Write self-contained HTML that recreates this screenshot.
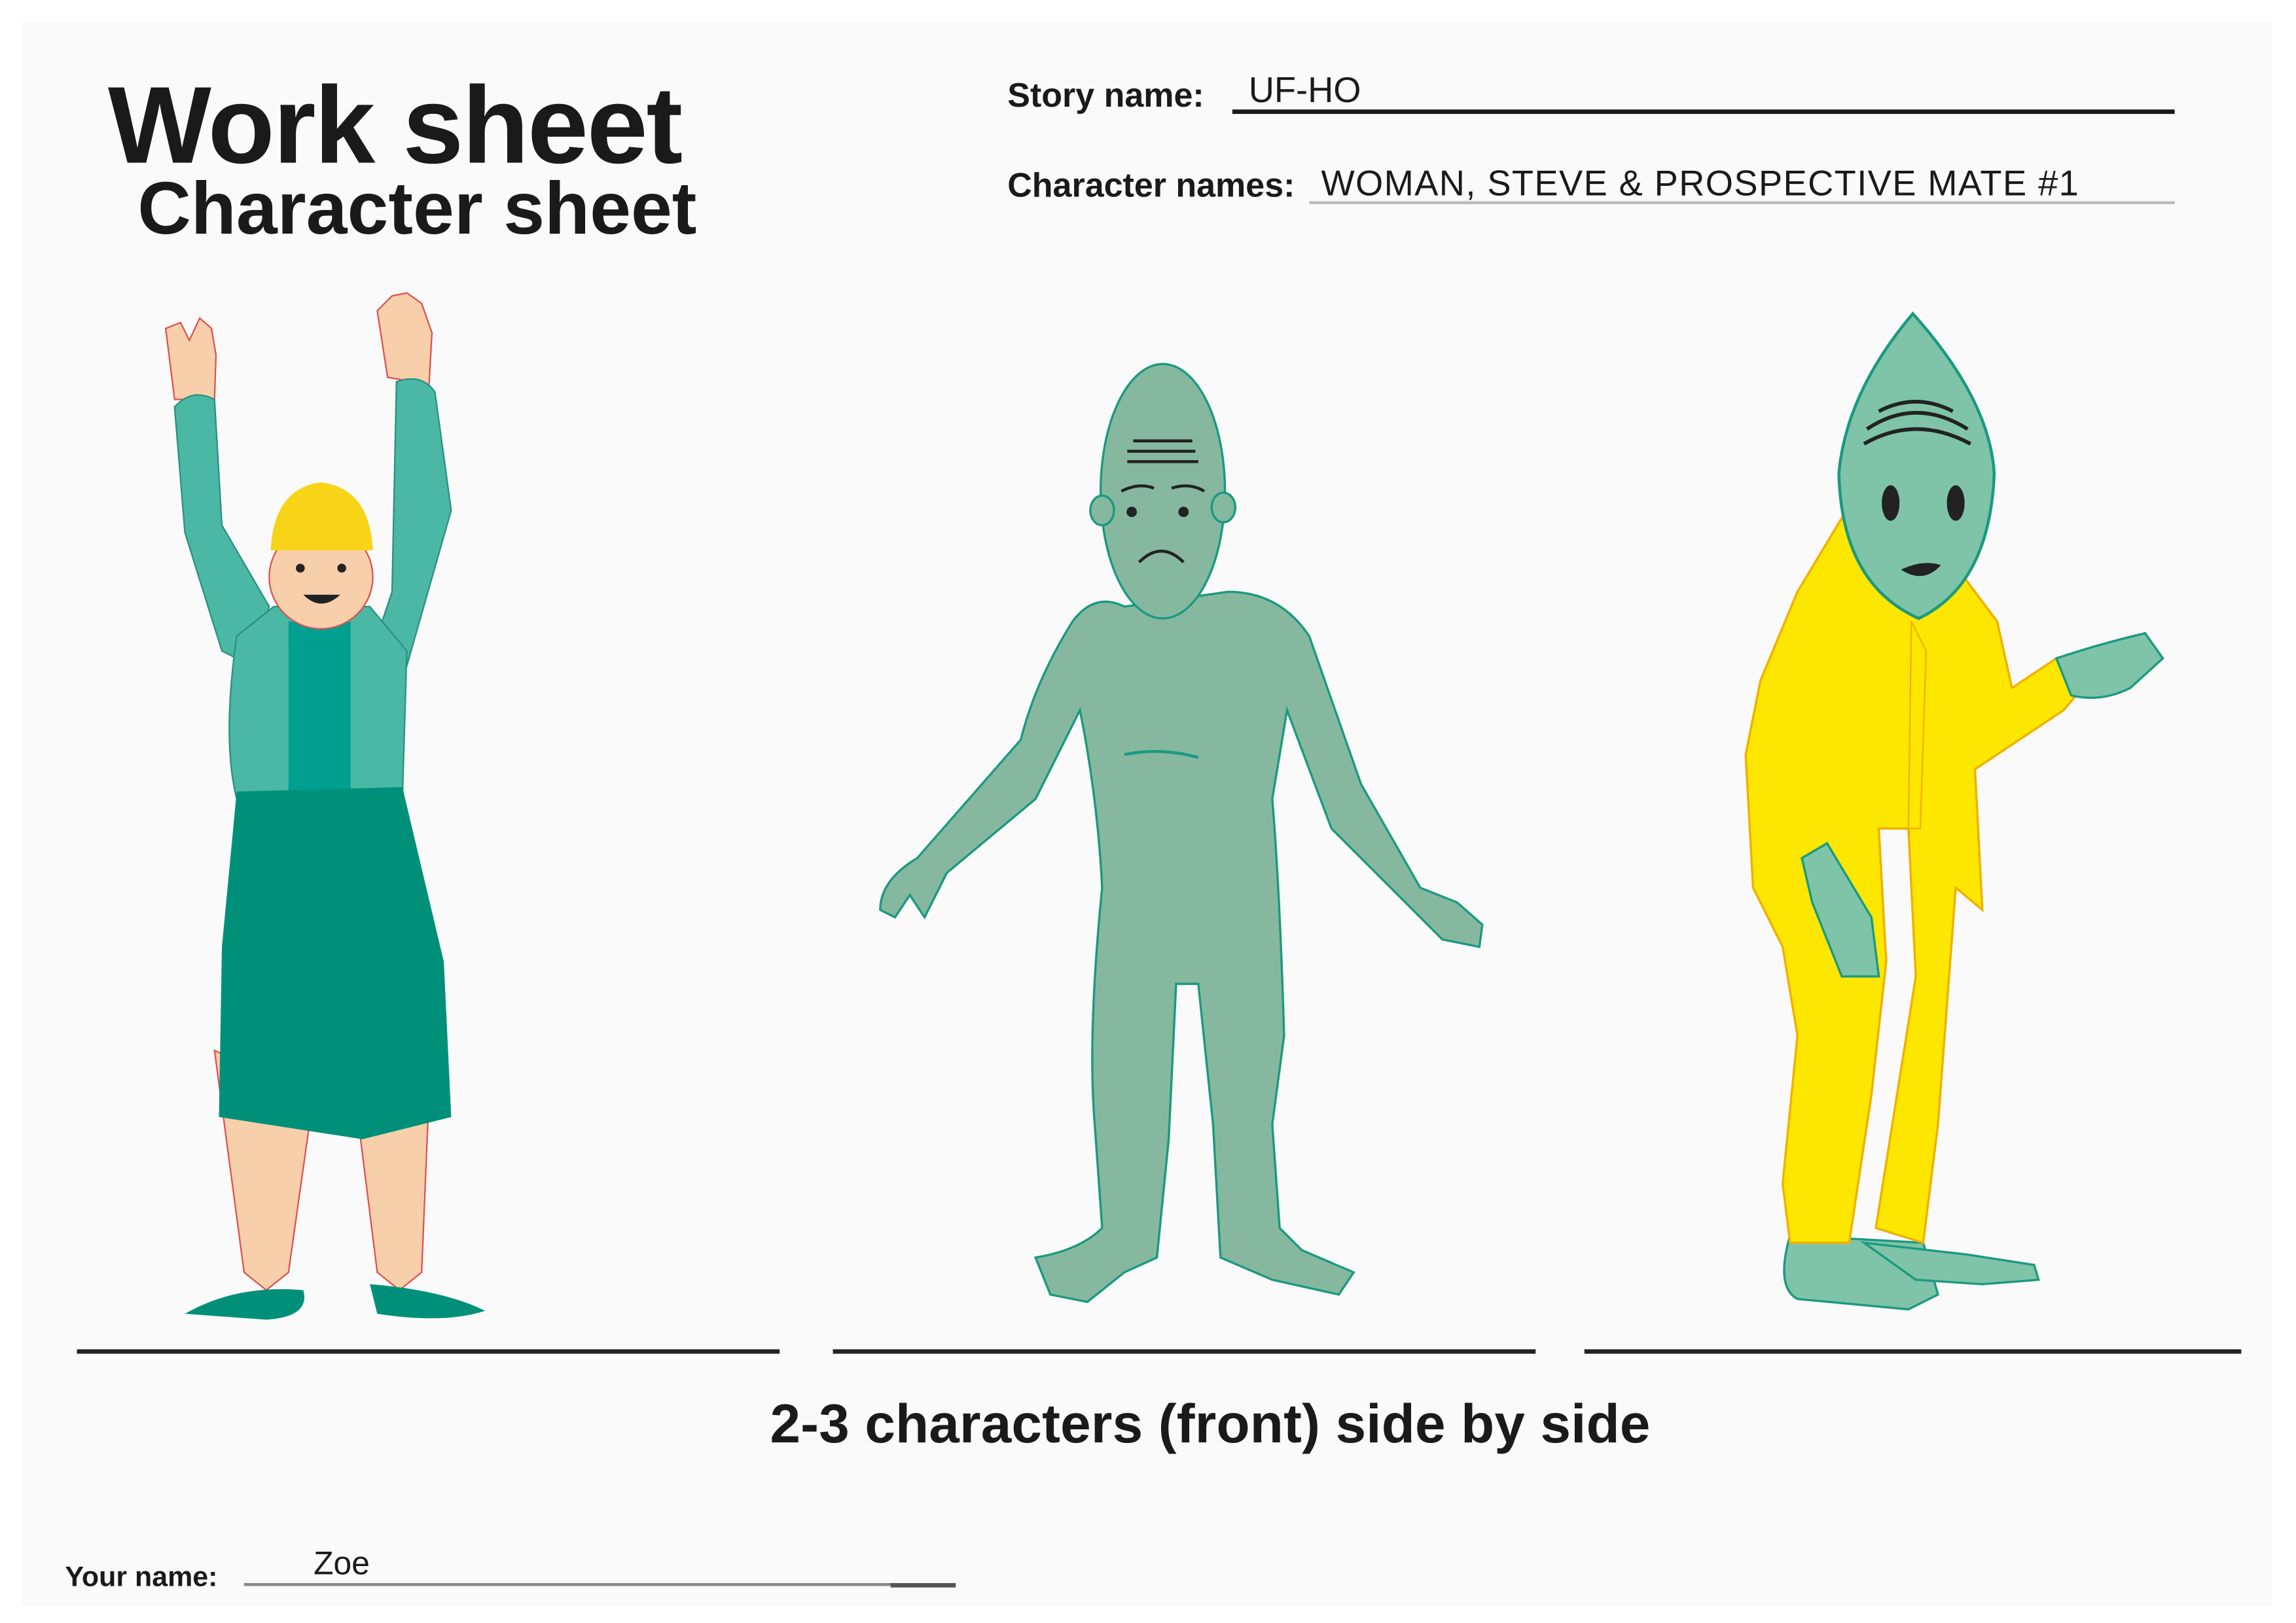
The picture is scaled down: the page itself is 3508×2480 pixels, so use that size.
<!DOCTYPE html>
<html><head><meta charset="utf-8"><style>
html,body{margin:0;padding:0;background:#fff;}
svg{display:block}
</style></head><body>
<svg width="3508" height="2480" viewBox="0 0 1552 1097" preserveAspectRatio="none" xmlns="http://www.w3.org/2000/svg">
<rect width="1552" height="1097" fill="#fff"/>
<rect x="15" y="15" width="1521" height="1070" fill="#fafafa"/>
<g font-family="Liberation Sans, sans-serif" fill="#1a1a1a">
<text x="73" y="110" font-size="74" font-weight="bold" letter-spacing="-1">Work sheet</text>
<text x="93" y="158" font-size="50" font-weight="bold">Character sheet</text>
<text x="681" y="72" font-size="23" font-weight="bold">Story name:</text>
<text x="844" y="69" font-size="24">UF-HO</text>
<text x="681" y="133" font-size="23" font-weight="bold">Character names:</text>
<text x="893" y="132" font-size="24" textLength="512">WOMAN, STEVE &amp; PROSPECTIVE MATE #1</text>
<text x="818" y="975" font-size="37" font-weight="bold" text-anchor="middle" textLength="595">2-3 characters (front) side by side</text>
<text x="44" y="1072" font-size="19" font-weight="bold">Your name:</text>
<text x="212" y="1064" font-size="22">Zoe</text>
</g>
<g>
<rect x="833" y="74" width="637" height="3" fill="#1a1a1a"/>
<rect x="885" y="136" width="585" height="2" fill="#bbb"/>
<rect x="52" y="912" width="475" height="3" fill="#222"/>
<rect x="563" y="912" width="475" height="3" fill="#222"/>
<rect x="1071" y="912" width="444" height="3" fill="#222"/>
<rect x="165" y="1070" width="480" height="2" fill="#888"/>
<rect x="602" y="1070" width="44" height="3" fill="#555"/>
</g>
<!-- Woman -->
<g stroke="#e05050" stroke-width="1">
<path d="M118 270 L112 222 L122 218 L128 230 L135 215 L143 222 L146 240 L145 270 Z" fill="#f7cfaa"/>
<path d="M262 255 L255 210 L265 200 L275 198 L285 205 L292 225 L290 260 Z" fill="#f7cfaa"/>
<path d="M145 710 L165 860 L180 872 L195 860 L212 740 Z" fill="#f7cfaa"/>
<path d="M240 740 L255 860 L270 872 L285 860 L290 740 Z" fill="#f7cfaa"/>
</g>
<path d="M125 888 Q160 868 205 872 Q210 890 180 892 Z" fill="#00907a"/>
<path d="M250 868 Q300 872 328 886 Q300 895 255 888 Z" fill="#00907a"/>
<g fill="#4ab8a5" stroke="#2a9080" stroke-width="1">
<path d="M118 275 Q130 262 145 270 L150 355 L182 410 L170 450 L150 440 L125 360 Z"/>
<path d="M268 258 Q285 252 294 265 L305 345 L275 450 L255 430 L265 400 Z"/>
<path d="M160 430 L185 410 L250 410 L275 440 L272 540 L160 540 Q150 500 160 430 Z"/>
</g>
<rect x="195" y="420" width="42" height="120" fill="#00a090"/>
<path d="M160 535 L272 532 L300 650 L305 755 L245 770 L148 755 L150 640 Z" fill="#00907a"/>
<ellipse cx="217" cy="390" rx="35" ry="35" fill="#f7cfaa" stroke="#e05050" stroke-width="1"/>
<path d="M183 372 Q185 330 217 326 Q250 330 252 372 Z" fill="#f7d418"/>
<circle cx="203" cy="384" r="3" fill="#222"/><circle cx="231" cy="384" r="3" fill="#222"/>
<path d="M205 402 Q217 414 230 402 Z" fill="#222"/>
<!-- Steve -->
<g fill="#86b8a0" stroke="#1a9a80" stroke-width="1.5">
<path d="M760 410 Q740 400 725 420 Q700 460 690 500 L620 580 Q595 595 595 615 L605 620 L615 605 L625 620 L640 590 L700 540 L730 480 Q742 540 745 600 Q735 700 740 760 L745 830 Q730 845 700 850 L710 875 L735 880 L760 860 L782 850 L790 770 L795 665 L810 665 L820 760 L825 850 L860 865 L905 875 L915 860 L880 845 L865 830 L860 760 L868 700 Q865 600 860 540 L870 480 L900 560 L955 615 L975 635 L1000 640 L1002 625 L985 610 L960 600 L920 530 L885 430 Q865 400 830 400 Z"/>
<ellipse cx="786" cy="332" rx="42" ry="86"/>
<ellipse cx="745" cy="345" rx="8" ry="10"/><ellipse cx="827" cy="343" rx="8" ry="10"/>
</g>
<g stroke="#222" stroke-width="2" fill="none">
<path d="M766 298 H806 M762 305 H808 M762 312 H810"/>
<path d="M770 380 Q785 365 800 380"/>
<path d="M758 332 Q770 326 780 330 M792 330 Q804 326 814 332"/>
</g>
<circle cx="765" cy="346" r="3.5" fill="#222"/><circle cx="800" cy="346" r="3.5" fill="#222"/>
<path d="M760 510 Q785 505 810 512" stroke="#1a9a80" stroke-width="2" fill="none"/>
<!-- Prospective mate -->
<g fill="#7fc4a8" stroke="#1a9a80" stroke-width="1.5">
<path d="M1210 835 Q1200 870 1215 878 L1290 885 L1310 875 L1300 840 Z"/>
<path d="M1260 840 L1330 848 L1375 855 L1378 865 L1340 868 L1295 865 Z"/>
</g>
<g fill="#fde600" stroke="#f0b000" stroke-width="1.5">
<path d="M1245 350 L1215 400 L1190 460 L1180 510 L1185 600 L1205 640 L1215 700 L1205 800 L1210 840 L1250 840 L1265 740 L1275 650 L1270 560 L1290 560 L1295 660 L1268 830 L1300 840 L1310 760 L1322 600 L1340 615 L1335 520 L1395 480 L1410 462 L1390 445 L1360 465 L1350 420 L1320 380 Z"/>
</g>
<path d="M1390 445 Q1420 435 1450 428 L1462 445 L1440 465 Q1420 475 1400 470 Z" fill="#7fc4a8" stroke="#1a9a80" stroke-width="1.5"/>
<path d="M1218 580 L1235 570 L1265 620 L1270 660 L1245 660 L1225 610 Z" fill="#7fc4a8" stroke="#1a9a80" stroke-width="1.5"/>
<path d="M1292 420 L1302 440 L1298 560 L1290 560 Z" fill="#fde600" stroke="#f0b000"/>
<path d="M1293 212 Q1345 270 1348 320 Q1345 395 1297 418 Q1245 395 1243 320 Q1248 265 1293 212 Z" fill="#7fc4a8" stroke="#1a9a80" stroke-width="2"/>
<g stroke="#222" stroke-width="2.5" fill="none">
<path d="M1262 290 Q1295 268 1330 290 M1260 300 Q1295 280 1332 300 M1270 278 Q1295 265 1320 278"/>
</g>
<ellipse cx="1278" cy="340" rx="6" ry="12" fill="#222"/><ellipse cx="1322" cy="340" rx="6" ry="12" fill="#222"/>
<path d="M1285 385 Q1300 395 1312 382 Q1300 378 1285 385 Z" fill="#222"/>
</svg>
</body></html>
